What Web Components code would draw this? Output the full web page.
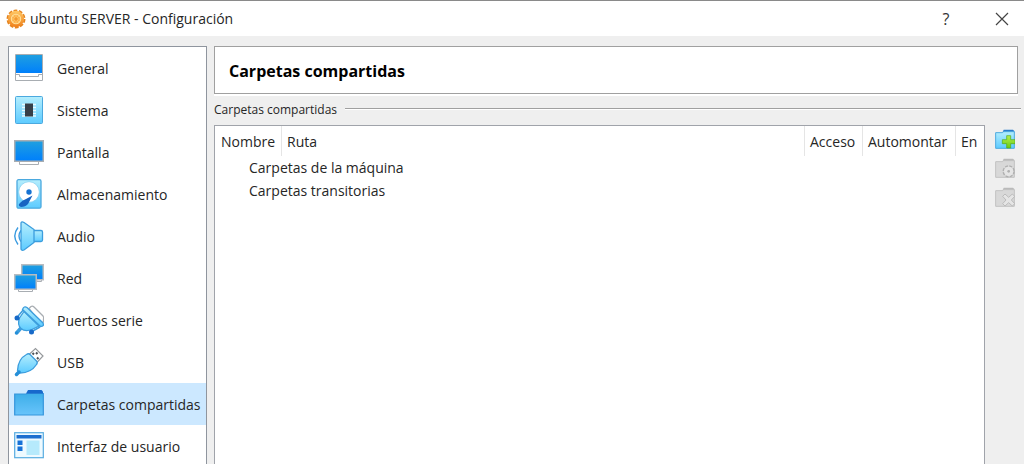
<!DOCTYPE html>
<html lang="es">
<head>
<meta charset="utf-8">
<title>ubuntu SERVER - Configuración</title>
<style>
    html, body {
        margin: 0;
        height: 100%;
        overflow: hidden;
    }
    body {
        background: #efefef;
        color: #262626;
        font-family: 'Segoe UI', 'Open Sans', 'Noto Sans', sans-serif;
        font-size: 14px;
    }
</style>
</head>
<body>
<settings-window></settings-window>

<script>
// gradients shared by the icons, each shadow root gets its own copy
const DEFS = `
    <defs>
        <linearGradient id="screen" x2="0" y2="1"><stop stop-color="#1f9fe0"/><stop offset="1" stop-color="#0080fb"/></linearGradient>
        <linearGradient id="light" x2="0" y2="1"><stop stop-color="#b5eefd"/><stop offset="1" stop-color="#5dcbff"/></linearGradient>
        <linearGradient id="folder" x2="0" y2="1"><stop stop-color="#3daee8"/><stop offset="1" stop-color="#68c4fb"/></linearGradient>
        <linearGradient id="gear" x2="0" y2="1"><stop stop-color="#ffc765"/><stop offset="1" stop-color="#f0801c"/></linearGradient>
        <linearGradient id="plus" x2="0" y2="1"><stop stop-color="#b4ee50"/><stop offset="1" stop-color="#68cc12"/></linearGradient>
    </defs>`;

const ICONS = {
    general: `
        <path d="M1.500 1.500h27v26h-27z" fill="#fff" stroke="#a8adb2"/>
        <path d="M2 2h26v18H2z" fill="url(#screen)"/>
        <path d="M1.500 21.500h4v2h19v-2h4" fill="none" stroke="#a8adb2"/>`,
    system: `
        <rect x="1.500" y="1.500" width="27" height="27" rx="1" fill="url(#light)" stroke="#4ba9df"/>
        <path d="M8 9.500h14M8 12.500h14M8 15.500h14M8 18.500h14M8 21h14" stroke="#e9fbff" stroke-width="1.500"/>
        <rect x="11" y="8.500" width="8" height="13" fill="#373f48"/>`,
    display: `
        <path d="M5.500 23h19v4.500h-19z" fill="#fff" stroke="#a8adb2"/>
        <rect x="0" y="3" width="30" height="22" fill="#a8adb2"/>
        <rect x="1.500" y="4.500" width="27" height="19" fill="url(#screen)"/>`,
    storage: `
        <rect x="3" y=".7" width="24" height="28.500" rx="1.500" fill="url(#light)" stroke="#4ba9df" stroke-width="1.300"/>
        <circle cx="15" cy="13" r="10.300" fill="#fff" stroke="#7bc8ed" stroke-width=".6"/>
        <path d="M18.500 16.500L14 25q-2.500 3-7 3-4-1.500-1-4 2-2.500 6-4z" fill="#1763c2"/>
        <circle cx="15" cy="13" r="2.700" fill="#1672d3"/>`,
    audio: `
        <path d="M4 6.500q-6.500 8.500 0 17M7 9.500q-4 5.500 0 11" fill="none" stroke="#3a9be0" stroke-width="1.400"/>
        <rect x="18" y="9.500" width="10.500" height="11" rx="1.500" fill="url(#light)" stroke="#3c9ddd" stroke-width="1.300"/>
        <path d="M7 2q.5-2 3-.5L20 8.500v13L10 29q-2.500 1-3-1z" fill="url(#light)" stroke="#3c9ddd" stroke-width="1.300"/>`,
    network: `
        <path d="M24 16h3.500v2.500H22z" fill="#fff" stroke="#a8adb2"/>
        <rect x="7" y="1" width="23" height="16.500" fill="#b8bcc0"/>
        <rect x="8.500" y="2.500" width="20" height="13.500" fill="url(#screen)"/>
        <path d="M4.500 26h14v2.500h-14z" fill="#fff" stroke="#a8adb2"/>
        <rect x="0" y="11" width="23" height="16" fill="#b8bcc0"/>
        <rect x="1.500" y="12.500" width="20" height="13" fill="url(#screen)"/>`,
    serial: `
        <path d="M15 3.500l2-2q1.500-1 3 .5l9 9q1 1.500.5 3v3L26 18z" fill="#fff" stroke="#a8adb2" stroke-width="1.300"/>
        <path d="M3 27.500L7 23" stroke="#3c9ddd" stroke-width="3.500" stroke-linecap="round"/>
        <path d="M2.500 13L10 4M17 27l9-5" stroke="#3c9ddd" stroke-width="1.500"/>
        <path d="M10 6.500L25 21l-7 3.500Q11 27 7 23.500T5.500 13z" fill="url(#light)" stroke="#3c9ddd" stroke-width="1.300"/>
        <path d="M8.500 4.500q1.500-4 4.500-2L29 18q1.500 3.500-2.500 3.500z" fill="url(#light)" stroke="#3c9ddd" stroke-width="1.300"/>
        <circle cx="3" cy="13" r="2.500" fill="#1769c8"/>
        <circle cx="17.500" cy="27" r="2.500" fill="#1769c8"/>
        <circle cx="2.500" cy="28" r="1.800" fill="#258fd8"/>`,
    usb: `
        <path d="M14.500 8L21.500 1.500 29 9l-6.500 7z" fill="#fff" stroke="#96999c" stroke-width="1.200"/>
        <path d="M18.500 6l1.500 1.500M23 10.500l1.500 1.500M22 5.500L23.500 7" stroke="#4d5358" stroke-width="2"/>
        <path d="M12.500 7.500q2-1.500 3.500 0l6.500 6.500q1.500 1.500 0 3.500Q17 26 6 26l-2.500-2.500Q4 12 12.500 7.500z" fill="url(#light)" stroke="#3c9ddd" stroke-width="1.300"/>
        <path d="M2.500 27.500L5 25" stroke="#258fd8" stroke-width="3.500" stroke-linecap="round"/>`,
    folder: `
        <path d="M.7 5h11l2-.5h15.600V26H.7z" fill="url(#folder)" stroke="#3595dc" stroke-width="1.200"/>
        <path d="M12 4.500L14 1h13.500L29 2.500v2z" fill="#1769cc"/>`,
    ui: `
        <rect x=".7" y="1.700" width="28.600" height="25" fill="#eefaff" stroke="#57ace0" stroke-width="1.200"/>
        <path d="M2.500 4h25v3.500h-25z" fill="#1c6ecf"/>
        <path d="M3.500 9.500h5V14h-5zM3.500 15.500h5V20h-5z" fill="#1672d8"/>
        <rect x="12.500" y="9.500" width="13" height="14.500" fill="#b6eafc"/>`,
    gear: `
        <circle cx="15" cy="15" r="12.200" fill="none" stroke="#e5841e" stroke-width="4" stroke-dasharray="5.400 2.260"/>
        <circle cx="15" cy="15" r="12.200" fill="url(#gear)"/>
        <circle cx="15" cy="15" r="7" fill="#fbb04a" stroke="#ffe19b" stroke-width="1.600"/>
        <path d="M15 8v14M8 15h14M10 10l10 10M20 10L10 20" stroke="#ffd68a" stroke-width=".8"/>
        <circle cx="15" cy="15" r="2.500" fill="#f3992f"/>`,
    add: `
        <path d="M11 5.500L13 1h14l2 2v3z" fill="#2a7ccb"/>
        <path d="M1 5.500h10l2-1.500h16v25H1z" fill="url(#light)" stroke="#4ba9df" stroke-width="1.500"/>
        <path d="M17.500 10h6v6H30v6h-6.500v6.500h-6V22H11v-6h6.500z" fill="url(#plus)" stroke="#53a912"/>`,
    edit: `
        <path d="M11 5.500L13 1h14l2 2v3z" fill="#bababa"/>
        <path d="M1 5.500h10l2-1.500h16v25H1z" fill="#d8d8d8" stroke="#c2c2c2" stroke-width="1.500"/>
        <circle cx="20.500" cy="20" r="8" fill="none" stroke="#b0b0b0" stroke-width="2.500" stroke-dasharray="4.280 2"/>
        <circle cx="20.500" cy="20" r="7" fill="#e5e5e5"/>
        <circle cx="20.500" cy="20" r="2" fill="#b0b0b0"/>`,
    remove: `
        <path d="M11 5.500L13 1h14l2 2v3z" fill="#bababa"/>
        <path d="M1 5.500h10l2-1.500h16v25H1z" fill="#d8d8d8" stroke="#c2c2c2" stroke-width="1.500"/>
        <path d="M15 10.500l5.500 5 5.500-5 3.500 3.500-5 5.500 5 5.500-3.500 3.500-5.500-5-5.500 5-3.500-3.500 5-5.500-5-5.500z" fill="#e5e5e5" stroke="#b3b3b3" stroke-width="1.200"/>`,
};

class AppIcon extends HTMLElement {
    constructor() {
        super();
        this.attachShadow({ mode: 'open' });
    }

    connectedCallback() {
        this.shadowRoot.innerHTML = `
        <style>
            :host { display: block; flex: none; width: var(--icon-size, 30px); height: var(--icon-size, 30px); }
            svg { display: block; width: 100%; height: 100%; }
        </style>
        <svg viewBox="0 0 30 30" aria-hidden="true">${DEFS}${ICONS[this.getAttribute('name')]}</svg>
        `;
    }
}

class TitleBar extends HTMLElement {
    constructor() {
        super();
        this.attachShadow({ mode: 'open' });
    }

    connectedCallback() {
        this.shadowRoot.innerHTML = `
        <style>
            :host {
                display: flex;
                align-items: center;
                box-sizing: border-box;
                height: 36px;
                padding-left: 6px;
                background: #fff;
                border-top: 1px solid #8a8a8a;
                --icon-size: 20px;
            }
            h1 {
                flex: 1;
                margin: 0 0 0 4px;
                font-size: 14px;
                font-weight: 400;
                line-height: 20px;
            }
            .buttons {
                display: flex;
                gap: 12px;
            }
            button {
                display: flex;
                align-items: center;
                justify-content: center;
                width: 44px;
                height: 34px;
                padding: 0;
                border: 0;
                background: none;
                color: #333;
                font: inherit;
                font-size: 16px;
            }
        </style>
        <app-icon name="gear"></app-icon>
        <h1><slot></slot></h1>
        <div class="buttons">
            <button type="button" aria-label="Ayuda">?</button>
            <button type="button" aria-label="Cerrar">
                <svg width="14" height="14" viewBox="0 0 14 14"><path d="M1 1l12 12M13 1L1 13" stroke="#444" stroke-width="1.200"/></svg>
            </button>
        </div>
        `;
    }
}

class NavItem extends HTMLElement {
    constructor() {
        super();
        this.attachShadow({ mode: 'open' });
    }

    connectedCallback() {
        this.shadowRoot.innerHTML = `
        <style>
            :host { display: block; }
            :host([selected]) { background: #cce8ff; }
            a {
                display: flex;
                align-items: center;
                gap: 13px;
                height: 42px;
                padding-left: 5px;
                color: inherit;
                text-decoration: none;
                white-space: nowrap;
            }
        </style>
        <a href="#${this.getAttribute('icon')}">
            <app-icon name="${this.getAttribute('icon')}"></app-icon>
            <span><slot></slot></span>
        </a>
        `;
    }
}

class FolderTable extends HTMLElement {
    constructor() {
        super();
        this.attachShadow({ mode: 'open' });
    }

    connectedCallback() {
        this.shadowRoot.innerHTML = `
        <style>
            :host {
                display: block;
                background: #fff;
                border: 1px solid #a0a3aa;
                border-bottom: 0;
            }
            table {
                width: 100%;
                table-layout: fixed;
                border-collapse: separate;
                border-spacing: 0;
            }
            th {
                height: 30px;
                padding: 0 0 0 5px;
                border-right: 1px solid #e5e5e5;
                box-sizing: border-box;
                font-weight: 400;
                text-align: left;
                white-space: nowrap;
            }
            th:first-child { width: 67px; padding-left: 6px; }
            th:nth-child(3) { width: 58px; }
            th:nth-child(4) { width: 93px; }
            th:nth-child(5) { width: 28px; border-right: 0; }
            td {
                height: 23px;
                padding: 0 0 0 34px;
                line-height: 20px;
            }
        </style>
        <table>
            <thead>
                <tr><th>Nombre</th><th>Ruta</th><th>Acceso</th><th>Automontar</th><th>En</th></tr>
            </thead>
            <tbody>
                <tr><td colspan="5">Carpetas de la máquina</td></tr>
                <tr><td colspan="5">Carpetas transitorias</td></tr>
            </tbody>
        </table>
        `;
    }
}

class FolderTools extends HTMLElement {
    constructor() {
        super();
        this.attachShadow({ mode: 'open' });
    }

    connectedCallback() {
        this.shadowRoot.innerHTML = `
        <style>
            :host {
                display: flex;
                flex-direction: column;
                gap: 9px;
                padding-top: 4px;
                --icon-size: 20px;
            }
            button {
                display: block;
                padding: 0;
                border: 0;
                background: none;
            }
        </style>
        <button type="button" aria-label="Agregar carpeta compartida"><app-icon name="add"></app-icon></button>
        <button type="button" aria-label="Editar carpeta compartida" disabled><app-icon name="edit"></app-icon></button>
        <button type="button" aria-label="Eliminar carpeta compartida" disabled><app-icon name="remove"></app-icon></button>
        `;
    }
}

class SettingsWindow extends HTMLElement {
    constructor() {
        super();
        this.attachShadow({ mode: 'open' });
    }

    connectedCallback() {
        this.shadowRoot.innerHTML = `
        <style>
            :host {
                display: flex;
                flex-direction: column;
                height: 100vh;
                overflow: hidden;
            }
            .body {
                flex: 1;
                display: grid;
                grid-template-columns: 199px minmax(0, 1fr);
                gap: 7px;
                min-height: 0;
                padding: 10px 0 0 8px;
            }
            nav {
                overflow: hidden;
                background: #fff;
                border: 1px solid #8f959e;
                border-bottom: 0;
            }
            main {
                display: flex;
                flex-direction: column;
                min-width: 0;
            }
            h2 {
                height: 46px;
                margin: 0 6px 0 0;
                padding-left: 14px;
                background: #fff;
                border: 1px solid #a0a0a0;
                box-shadow: 0 2px #fff;
                color: #000;
                font-size: 16px;
                font-weight: 700;
                line-height: 49px;
            }
            .group {
                display: flex;
                align-items: center;
                gap: 8px;
                height: 31px;
                padding-right: 3px;
            }
            .group::after {
                content: '';
                flex: 1;
                height: 1px;
                margin-bottom: 3px;
                background: #a0a0a0;
                box-shadow: 0 1px #fff;
            }
            h3 {
                margin: 0;
                font-size: 12px;
                font-weight: 400;
            }
            .content {
                flex: 1;
                display: flex;
                gap: 10px;
                padding-right: 9px;
            }
            folder-table { flex: 1; }
        </style>
        <title-bar>ubuntu SERVER - Configuración</title-bar>
        <div class="body">
            <nav>
                <nav-item icon="general">General</nav-item>
                <nav-item icon="system">Sistema</nav-item>
                <nav-item icon="display">Pantalla</nav-item>
                <nav-item icon="storage">Almacenamiento</nav-item>
                <nav-item icon="audio">Audio</nav-item>
                <nav-item icon="network">Red</nav-item>
                <nav-item icon="serial">Puertos serie</nav-item>
                <nav-item icon="usb">USB</nav-item>
                <nav-item icon="folder" selected>Carpetas compartidas</nav-item>
                <nav-item icon="ui">Interfaz de usuario</nav-item>
            </nav>
            <main>
                <h2>Carpetas compartidas</h2>
                <div class="group"><h3>Carpetas compartidas</h3></div>
                <div class="content">
                    <folder-table></folder-table>
                    <folder-tools></folder-tools>
                </div>
            </main>
        </div>
        `;
    }
}

customElements.define('app-icon', AppIcon);
customElements.define('title-bar', TitleBar);
customElements.define('nav-item', NavItem);
customElements.define('folder-table', FolderTable);
customElements.define('folder-tools', FolderTools);
customElements.define('settings-window', SettingsWindow);
</script>
</body>
</html>
